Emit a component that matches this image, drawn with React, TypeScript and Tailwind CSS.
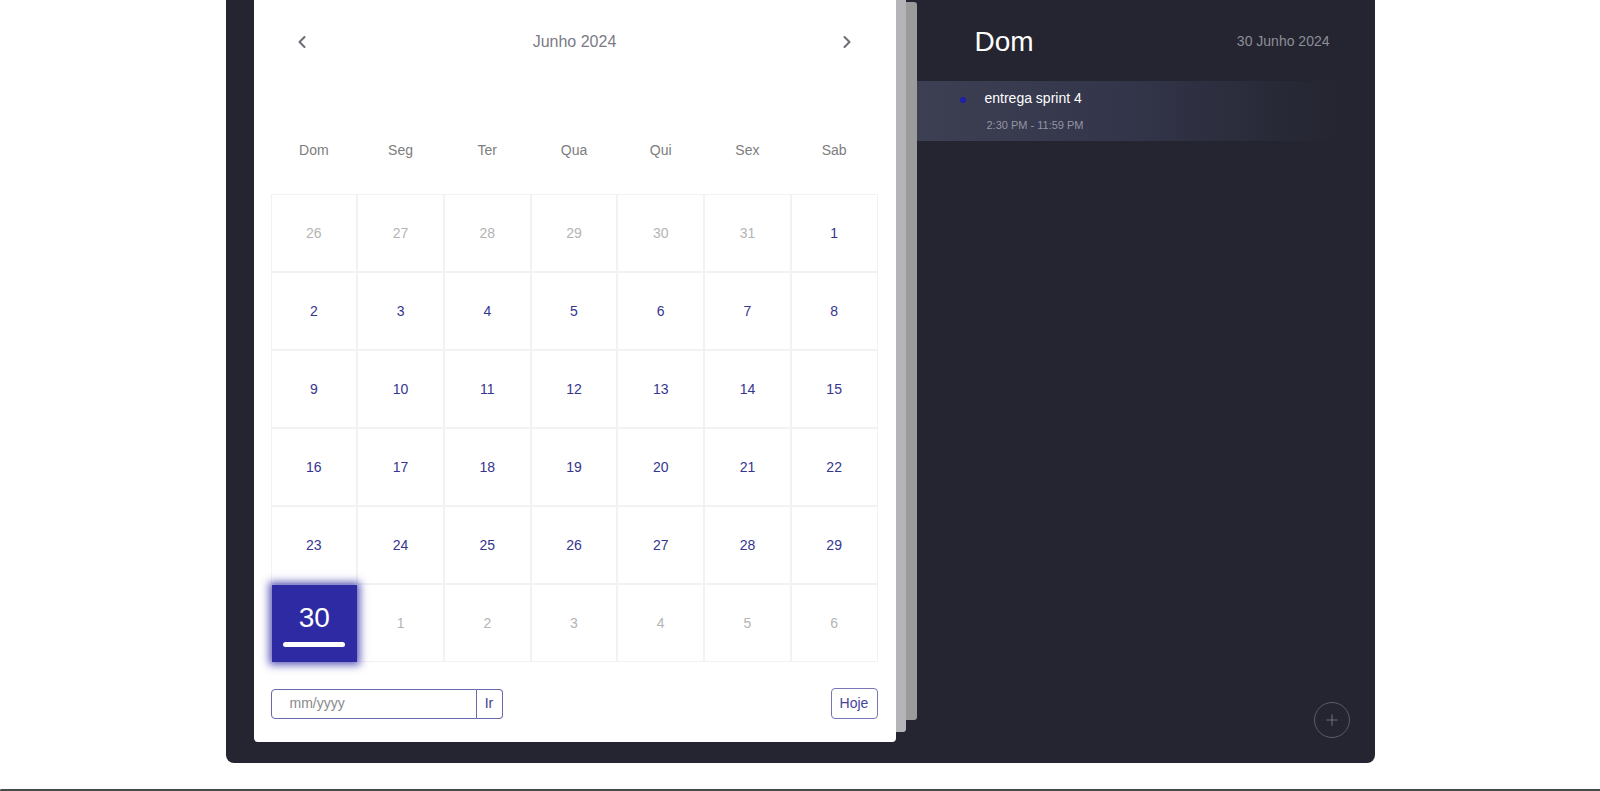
import { ChevronLeft, ChevronRight, Plus } from "lucide-react";

const weekDays = ["Dom", "Seg", "Ter", "Qua", "Qui", "Sex", "Sab"];

type Day = { label: number; current: boolean; selected?: boolean };

const buildDays = (): Day[] => {
  const days: Day[] = [];
  [26, 27, 28, 29, 30, 31].forEach((d) => days.push({ label: d, current: false }));
  for (let d = 1; d <= 30; d++) days.push({ label: d, current: true, selected: d === 30 });
  for (let d = 1; d <= 6; d++) days.push({ label: d, current: false });
  return days;
};

const DayCell = ({ day }: { day: Day }) => {
  if (day.selected) {
    return (
      <div className="h-[77px] mt-[1px] ml-[1px] bg-[#2e2aa3] shadow-[0_0_8px_3px_rgba(46,42,163,0.75)] flex flex-col items-center justify-center relative z-10">
        <span className="text-[28px] leading-[32px] text-white mt-[2px]">{day.label}</span>
        <span className="w-[62px] h-[5px] rounded-full bg-white mt-[8px]" />
      </div>
    );
  }
  return (
    <div
      className={`h-[78px] border border-[#f2f2f4] flex items-center justify-center text-[14px] ${
        day.current ? "text-[#36358f]" : "text-[#b4b4b4]"
      }`}
    >
      {day.label}
    </div>
  );
};

const CalendarCard = () => {
  const days = buildDays();
  return (
    <div className="w-[642px] h-[742px] bg-white rounded-b-[4px] px-[17px] flex flex-col">
      <div className="h-[83px] flex items-center justify-between px-[21px] text-[#6e6e78]">
        <ChevronLeft size={20} strokeWidth={2.5} />
        <span className="text-[16px] text-[#7b7b85]">Junho 2024</span>
        <ChevronRight size={20} strokeWidth={2.5} />
      </div>
      <div className="mt-[47px] h-[40px] grid grid-cols-7 w-[607px]">
        {weekDays.map((d) => (
          <div key={d} className="flex items-center justify-center text-[14px] text-[#7d7d7d]">
            {d}
          </div>
        ))}
      </div>
      <div className="mt-[24px] grid grid-cols-7 w-[607px]">
        {days.map((day, i) => (
          <DayCell key={i} day={day} />
        ))}
      </div>
      <div className="mt-[26px] flex items-center justify-between w-[607px]">
        <div className="flex h-[30px]">
          <div className="w-[206px] border border-[#6967ab] rounded-l-[4px] flex items-center pl-[18px] text-[14px] text-[#8a8a8a]">
            mm/yyyy
          </div>
          <div className="w-[26px] border border-l-0 border-[#6967ab] rounded-r-[4px] flex items-center justify-center text-[14px] text-[#3f3e90]">
            Ir
          </div>
        </div>
        <div className="w-[47px] h-[31px] border border-[#7876b8] rounded-[4px] flex items-center justify-center text-[14px] text-[#46459a]">
          Hoje
        </div>
      </div>
    </div>
  );
};

const DayPane = () => (
  <div className="flex-1 flex flex-col">
    <div className="h-[81px] flex items-center justify-between pl-[58px] pr-[45px] pt-[2px]">
      <span className="text-[28px] text-white">Dom</span>
      <span className="text-[14px] text-[#8d8e99]">30 Junho 2024</span>
    </div>
    <div className="h-[60px] w-[420px] bg-gradient-to-r from-[#3d3f53] via-[#33354a] to-transparent flex pl-[43px] pt-[8px]">
      <span className="w-[6px] h-[6px] rounded-full bg-[#1f1fa8] mt-[8px]" />
      <div className="ml-[19px] flex flex-col">
        <span className="text-[14px] leading-[18px] text-white">entrega sprint 4</span>
        <span className="text-[11px] leading-[14px] text-[#9495a2] mt-[11px] pl-[2px]">2:30 PM - 11:59 PM</span>
      </div>
    </div>
    <div className="mt-auto self-end mr-[25px] mb-[25px] w-[36px] h-[36px] rounded-full border-[1.5px] border-[#5b5c69] flex items-center justify-center text-[#6b6c78]">
      <Plus size={18} strokeWidth={1.5} />
    </div>
  </div>
);

export default function App() {
  return (
    <div className="h-[791px] overflow-hidden bg-white flex flex-col font-['Liberation_Sans',Arial,sans-serif]">
      <div className="mx-auto w-[1149px] h-[763px] shrink-0 bg-[#242530] rounded-b-[8px] flex">
        <div className="flex items-start pl-[28px]">
          <CalendarCard />
          <div className="w-[10px] h-[732px] bg-[#b5b5b9] rounded-br-[3px]" />
          <div className="w-[11px] h-[718px] mt-[2px] bg-[#9b9b9b] rounded-r-[3px]" />
        </div>
        <DayPane />
      </div>
      <div className="mt-auto h-[2px] border-t-2 border-l-2 border-[#4a4a4a] rounded-tl-[6px]" />
    </div>
  );
}
